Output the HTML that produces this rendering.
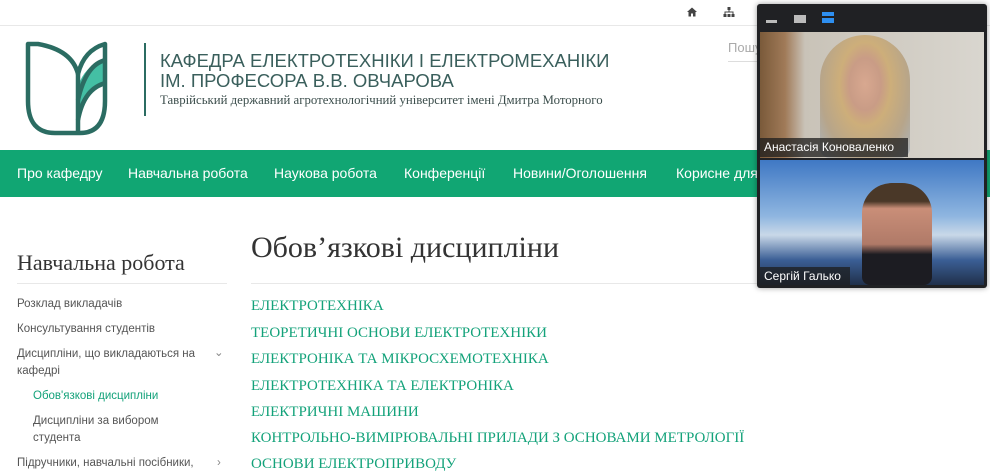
<!DOCTYPE html>
<html><head><meta charset="utf-8"><style>
*{margin:0;padding:0;box-sizing:border-box}
body{width:990px;height:466px;overflow:hidden;background:#fff;position:relative;font-family:"Liberation Sans",sans-serif}
.abs{position:absolute}
.nav{position:absolute;left:0;top:150px;width:990px;height:47px;background:#11a673}
.nav span{position:absolute;top:15px;color:#fff;font-size:14px;white-space:nowrap}
.side{position:absolute;left:17px;font-size:11.5px;color:#555;line-height:17px;white-space:nowrap}
.lk{position:absolute;left:251px;font-family:"Liberation Serif",serif;font-size:15px;color:#13a27a;white-space:nowrap}
</style></head><body>
<div class="abs" style="left:0;top:25px;width:990px;height:1px;background:#e8e8e8"></div>
<svg class="abs" style="left:686px;top:6px" width="12" height="12" viewBox="0 0 12 12"><path d="M1,6 L6,1.5 L11,6 L9.5,6 L9.5,10.5 L7,10.5 L7,7.5 L5,7.5 L5,10.5 L2.5,10.5 L2.5,6Z" fill="#444"/></svg>
<svg class="abs" style="left:723px;top:6px" width="12" height="12" viewBox="0 0 12 12"><rect x="4.5" y="1" width="3" height="3" fill="#444"/><rect x="5.5" y="4" width="1" height="2" fill="#444"/><rect x="1.5" y="5.5" width="9" height="1" fill="#444"/><rect x="1.5" y="6" width="1" height="2" fill="#444"/><rect x="9.5" y="6" width="1" height="2" fill="#444"/><rect x="0.5" y="8" width="3" height="3" fill="#444"/><rect x="4.5" y="8" width="3" height="3" fill="#444"/><rect x="8.5" y="8" width="3" height="3" fill="#444"/></svg>
<div class="abs" style="left:728px;top:40px;font-size:13px;color:#aaa">Пошу</div>
<div class="abs" style="left:728px;top:61px;width:40px;height:1px;background:#ddd"></div>

<svg class="abs" style="left:20px;top:36px" width="100" height="100" viewBox="0 0 100 100">
<path d="M60,45 Q68,28 85,24 L85,47 Q68,52 60,74Z" fill="#44bfa4"/>
<path d="M8,8 L18,8 Q52,14 58,38 Q64,14 85,8 L85,8 L85,65 Q85,97 60,97 L35,97 Q8,97 8,65Z" fill="none" stroke="#2b6c62" stroke-width="4.5" stroke-linejoin="round"/>
<path d="M58,38 L58,97" stroke="#2b6c62" stroke-width="4.5"/>
<path d="M58,64 Q66,28 86,24" fill="none" stroke="#2b6c62" stroke-width="4.5"/>
<path d="M58,84 Q64,52 86,47" fill="none" stroke="#2b6c62" stroke-width="4.5"/>
</svg>
<div class="abs" style="left:144px;top:43px;width:1.5px;height:73px;background:#2b6c62"></div>
<div class="abs" style="left:160px;top:51px;font-size:18.5px;color:#3a5f5c;line-height:20px;white-space:nowrap">КАФЕДРА ЕЛЕКТРОТЕХНІКИ І ЕЛЕКТРОМЕХАНІКИ<br>ІМ. ПРОФЕСОРА В.В. ОВЧАРОВА</div>
<div class="abs" style="left:160px;top:93px;font-family:'Liberation Serif',serif;font-size:12.8px;color:#3c4e4c;white-space:nowrap">Таврійський державний агротехнологічний університет імені Дмитра Моторного</div>

<div class="nav"><span style="left:17px">Про кафедру</span><span style="left:128px">Навчальна робота</span><span style="left:274px">Наукова робота</span><span style="left:404px">Конференції</span><span style="left:513px">Новини/Оголошення</span><span style="left:676px">Корисне для</span></div>

<div class="abs" style="left:17px;top:250px;font-family:'Liberation Serif',serif;font-size:22px;color:#333;white-space:nowrap">Навчальна робота</div>
<div class="abs" style="left:17px;top:283px;width:210px;height:1px;background:#e8e8e8"></div>
<div class="side" style="top:296px">Розклад викладачів</div>
<div class="side" style="top:321px">Консультування студентів</div>
<div class="side" style="top:346px">Дисципліни, що викладаються на<br>кафедрі</div>
<div class="side" style="top:345px;left:214px;color:#888">⌄</div>
<div class="side" style="top:388px;left:33px;color:#13a27a">Обов'язкові дисципліни</div>
<div class="side" style="top:413px;left:33px">Дисципліни за вибором<br>студента</div>
<div class="side" style="top:455px">Підручники, навчальні посібники,</div>
<div class="side" style="top:455px;left:217px;color:#888">›</div>

<div class="abs" style="left:251px;top:231px;font-family:'Liberation Serif',serif;font-size:30px;color:#333;white-space:nowrap">Обов’язкові дисципліни</div>
<div class="abs" style="left:251px;top:283px;width:720px;height:1px;background:#e8e8e8"></div>
<div class="lk" style="top:298px">ЕЛЕКТРОТЕХНІКА</div>
<div class="lk" style="top:325px">ТЕОРЕТИЧНІ ОСНОВИ ЕЛЕКТРОТЕХНІКИ</div>
<div class="lk" style="top:351px">ЕЛЕКТРОНІКА ТА МІКРОСХЕМОТЕХНІКА</div>
<div class="lk" style="top:378px">ЕЛЕКТРОТЕХНІКА ТА ЕЛЕКТРОНІКА</div>
<div class="lk" style="top:404px">ЕЛЕКТРИЧНІ МАШИНИ</div>
<div class="lk" style="top:430px">КОНТРОЛЬНО-ВИМІРЮВАЛЬНІ ПРИЛАДИ З ОСНОВАМИ МЕТРОЛОГІЇ</div>
<div class="lk" style="top:456px">ОСНОВИ ЕЛЕКТРОПРИВОДУ</div>

<div class="abs" style="left:757px;top:4px;width:230px;height:284px;background:#202124;border-radius:3px;box-shadow:0 0 6px rgba(0,0,0,.4)"></div>
<div class="abs" style="left:766px;top:20px;width:11px;height:3px;background:#bbb"></div>
<div class="abs" style="left:794px;top:15px;width:12px;height:8px;background:#bbb"></div>
<div class="abs" style="left:822px;top:12px;width:12px;height:4px;background:#2e8ff0"></div>
<div class="abs" style="left:822px;top:18px;width:12px;height:5px;background:#2e8ff0"></div>
<div class="abs" style="left:760px;top:32px;width:224px;height:126px;background:linear-gradient(90deg,#7a5a3a 0,#a07a58 25px,#c9c3b8 45px,#d9d6cf 100%)"></div>
<div class="abs" style="left:820px;top:35px;width:90px;height:123px;border-radius:45px 45px 10px 10px;background:radial-gradient(ellipse at 50% 40%,#d8a890 0,#c99c86 25%,#cdae7a 40%,#b7a58a 70%,#aab4be 100%)"></div>
<div class="abs" style="left:760px;top:138px;width:148px;height:19px;background:rgba(30,30,30,.75);color:#fff;font-size:12px;padding:2px 4px;white-space:nowrap">Анастасія Коноваленко</div>
<div class="abs" style="left:760px;top:160px;width:224px;height:125px;background:linear-gradient(180deg,#3f78c4 0,#8fb6e0 45%,#c9d8e8 60%,#3b5f95 80%,#20304a 100%)"></div>
<div class="abs" style="left:862px;top:183px;width:70px;height:102px;border-radius:30px 30px 8px 8px;background:linear-gradient(180deg,#4a3828 0,#4a3828 18%,#c98e78 25%,#b07a68 60%,#1c1c22 70%)"></div>
<div class="abs" style="left:760px;top:267px;width:90px;height:18px;background:rgba(30,30,30,.75);color:#fff;font-size:12px;padding:2px 4px;white-space:nowrap">Сергій Галько</div>
</body></html>
